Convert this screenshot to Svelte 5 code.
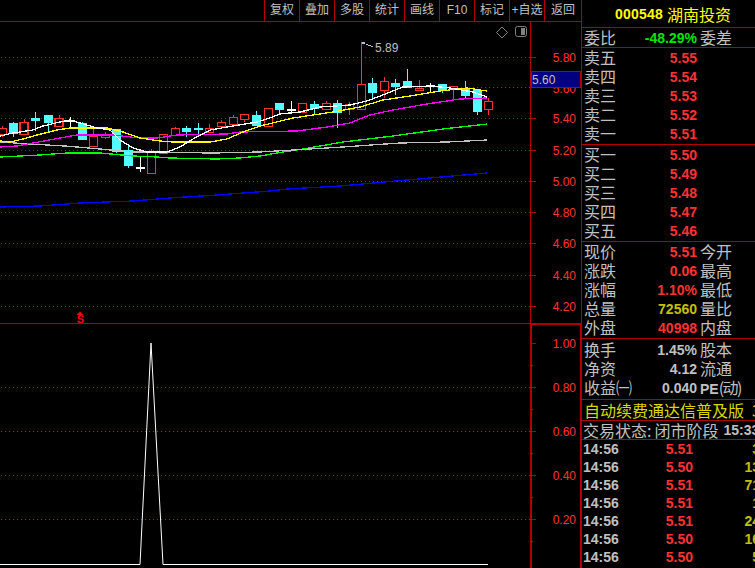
<script>
  const buttons = ['复权', '叠加', '多股', '统计', '画线', 'F10', '标记', '+自选', '返回'];

  // [centre x, high, low, body top, body bottom, half width, kind]
  const candles = [
    [2, 126, 137, 128, 134, 4, 'r'], [12.5, 122, 137, 123, 133, 4, 'c'], [23.5, 119, 134, 122, 134, 4, 'r'],
    [35, 112, 131, 118, 120, 4, 'c'], [47.5, 115, 132, 115, 122, 4, 'c'], [58.5, 115, 126, 118, 126, 4, 'r'],
    [70, 117, 127, 120, 121, 4, 'w'], [82, 122, 140, 123, 139, 4, 'c'], [93, 126, 146, 136, 146, 4, 'r'],
    [105, 132, 139, 134, 137, 4, 'r'], [116, 129, 153, 129, 151, 4, 'c'], [128, 145, 168, 150, 165, 4, 'c'],
    [140, 157, 172, 167, 168, 4, 'w'], [151, 149, 173, 151, 173, 4, 'r'], [163, 134, 153, 134, 153, 4, 'r'],
    [175, 127, 135, 128, 135, 4, 'r'], [186, 126, 137, 128, 131, 4, 'c'], [198, 123, 137, 128, 129, 4, 'c'],
    [209, 124, 132, 128, 132, 4, 'r'], [221, 120, 126, 122, 126, 4, 'r'], [233, 115, 124, 117, 124, 4, 'r'],
    [244, 114, 122, 114, 119, 4, 'r'], [256, 111, 125, 115, 125, 4, 'c'], [268, 108, 126, 108, 126, 4, 'r'],
    [279, 103, 114, 103, 109, 4, 'c'], [291, 101, 114, 109, 110, 4, 'w'], [302, 103, 112, 103, 112, 4, 'r'],
    [314, 101, 114, 104, 108, 4, 'c'], [326, 101, 109, 103, 109, 4, 'r'], [337, 100, 128, 103, 112, 4, 'c'],
    [349, 102, 115, 104, 109, 4, 'r'], [361, 42, 109, 84, 109, 4, 'r'], [372, 78, 99, 83, 92, 4, 'c'],
    [384, 77, 98, 81, 90, 4, 'r'], [395, 79, 95, 83, 86, 4, 'c'], [407, 69, 87, 81, 87, 4, 'c'],
    [419, 80, 90, 88, 90, 4, 'r'], [430, 83, 92, 85, 86, 4, 'w'], [442, 84, 93, 84, 90, 4, 'c'],
    [453, 86, 101, 86, 89, 4, 'r'], [465, 81, 98, 89, 95, 4, 'c'], [477, 90, 115, 90, 111, 4, 'c'],
    [488, 98, 115, 101, 109, 4, 'r']
  ];

  const lines = [
    ['blue', '0,207 40,206 80,203 133,201 170,198 217,195 270,191 287,189 340,186 407,180 487,173'],
    ['green', '0,157 40,155 67,153 100,153 133,156 157,157 170,158 217,159 240,158 260,156 277,153 303,149 343,142 393,136 443,129 487,124'],
    ['gray', '0,142 30,144 65,146 100,149 133,152 213,153 260,152 343,147 357,146 400,143 447,142 487,140'],
    ['magenta', '0,147 17,146 33,143 60,138 77,135 113,135 140,138 157,138 177,135 227,134 240,132 297,131 327,127 350,123 370,115 393,110 427,104 460,99 487,98'],
    ['yellow', '0,141 10,142 23,139 37,135 57,130 70,128 107,128 123,132 140,138 160,141 173,142 210,142 227,139 243,132 260,126 293,118 333,112 360,107 383,100 410,96 440,91 467,88 487,91'],
    ['white', '0,136 13,133 33,130 43,126 60,122 70,120 80,123 97,128 110,130 120,140 133,148 147,152 167,152 180,147 193,139 210,130 233,126 257,122 270,118 280,114 300,112 320,107 350,105 367,101 383,95 403,87 430,86 450,88 473,92 487,97']
  ];

  const grid = [57, 87, 118, 150, 181, 212, 243, 275, 306];
  const upperLabels = [[5.8, 57], [5.6, 88], [5.4, 118], [5.2, 150], [5.0, 181], [4.8, 212], [4.6, 243], [4.4, 275], [4.2, 306]];
  const lowerLabels = [['1.00', 343], ['0.80', 387], ['0.60', 431], ['0.40', 475], ['0.20', 519]];

  const sells = [['卖五', '5.55'], ['卖四', '5.54'], ['卖三', '5.53'], ['卖二', '5.52'], ['卖一', '5.51']];
  const buys = [['买一', '5.50'], ['买二', '5.49'], ['买三', '5.48'], ['买四', '5.47'], ['买五', '5.46']];
  const quote = [
    ['现价', '5.51', '今开', 'red'], ['涨跌', '0.06', '最高', 'red'], ['涨幅', '1.10%', '最低', 'red'],
    ['总量', '72560', '量比', 'vol'], ['外盘', '40998', '内盘', 'red']
  ];
  const stats = [['换手', '1.45%', '股本'], ['净资', '4.12', '流通']];
  const ticks = [
    ['14:56', '5.51', '3'], ['14:56', '5.50', '13'], ['14:56', '5.51', '71'], ['14:56', '5.51', '1'],
    ['14:56', '5.51', '24'], ['14:56', '5.50', '16'], ['14:56', '5.50', '5']
  ];
</script>

<div class="screen">
  <div class="left">
    <div class="toolbar">
      {#each buttons as b}
        <div class="tool">{b}</div>
      {/each}
    </div>
    <svg class="chart" width="581" height="546" viewBox="0 22 581 546">
      {#each grid as y}
        <line class="dots" x1="1" x2="530" y1={y + 0.5} y2={y + 0.5} />
        <line class="axis" x1="530" x2="536" y1={y + 0.5} y2={y + 0.5} />
      {/each}
      {#each lowerLabels.slice(1) as l}
        <line class="dots" x1="1" x2="530" y1={l[1] + 0.5} y2={l[1] + 0.5} />
      {/each}
      {#each lowerLabels as l}
        <line class="axis" x1="531" x2="536" y1={l[1] + 0.5} y2={l[1] + 0.5} />
        <line class="axis" x1="531" x2="533" y1={l[1] + 22.5} y2={l[1] + 22.5} />
      {/each}

      {#each candles as [x, hi, lo, top, bot, w, kind]}
        <g class={kind}>
          {#if kind === 'r'}
            <line x1={x + 0.5} x2={x + 0.5} y1={hi} y2={top} />
            <line x1={x + 0.5} x2={x + 0.5} y1={bot} y2={lo} />
            <rect class="hollow" x={x - w + 0.5} y={top + 0.5} width={w * 2} height={bot - top} />
          {:else}
            <line x1={x + 0.5} x2={x + 0.5} y1={hi} y2={lo} />
            <rect class="solid" x={x - w} y={top} width={w * 2 + 1} height={bot - top + 1} />
          {/if}
        </g>
      {/each}

      {#each lines as [cls, pts]}
        <polyline class="ma {cls}" points={pts} />
      {/each}

      <path class="flag" d="M361.5 42.5h3M362 44l3-1M366 44l7 3" />
      <text class="hl" x="375" y="52">5.89</text>
      <path class="diamond" d="M502 27l5.5 5.5-5.5 5.5-5.5-5.5z" />
      <rect class="winbox" x="515.5" y="26.5" width="11" height="10" rx="2" />
      <rect class="winfill" x="521" y="28" width="4" height="7" />

      <polygon class="mark" points="80,311.5 76.5,315 83.5,315" />
      <text class="mark-s" x="80.5" y="323">S</text>

      <polyline class="pulse" points="0,564.5 140,564.5 151,343 163,564.5 488,564.5" />

      <line class="rule" x1="0" x2="530" y1="323.5" y2="323.5" />
      <rect class="rule-fill" x="530" y="323" width="51" height="2" />
      <line class="rule" x1="530.5" x2="530.5" y1="22" y2="323" />
      <rect class="rule-fill" x="530" y="323" width="2" height="245" />
      <rect class="rule-fill" x="580" y="323" width="1" height="245" />

      {#each upperLabels as [v, y]}
        <text class="axis-label" x="576" y={y + 5}>{v.toFixed(2)}</text>
      {/each}
      {#each lowerLabels as [v, y]}
        <text class="axis-label" x="576" y={y + 5}>{v}</text>
      {/each}

      <rect class="cursor" x="531.5" y="71.5" width="49" height="16" />
      <text class="cursor-text" x="532" y="84">5.60</text>
    </svg>
  </div>

  <aside class="panel">
    <div class="title"><b>000548</b><span>湖南投资</span></div>
    <div class="section ratio">
      <div class="row"><span>委比</span><b class="green">-48.29%</b><span class="second">委差</span></div>
    </div>
    <div class="section five">
      {#each sells as [l, v]}
        <div class="row"><span>{l}</span><b class="red">{v}</b></div>
      {/each}
    </div>
    <div class="section five">
      {#each buys as [l, v]}
        <div class="row"><span>{l}</span><b class="red">{v}</b></div>
      {/each}
    </div>
    <div class="section five">
      {#each quote as [l, v, s, c]}
        <div class="row"><span>{l}</span><b class={c}>{v}</b><span class="second">{s}</span></div>
      {/each}
    </div>
    <div class="section stats">
      {#each stats as [l, v, s]}
        <div class="row"><span>{l}</span><b>{v}</b><span class="second">{s}</span></div>
      {/each}
      <div class="row"><span>收益㈠</span><b>0.040</b><span class="second pe"><b>PE</b><span class="dyn">(动)</span></span></div>
    </div>
    <div class="section notice"><span>自动续费通达信普及版</span><span class="more">3</span></div>
    <div class="section status"><span>交易状态:</span><span class="state">闭市阶段</span><b>15:33</b></div>
    <div class="ticks">
      {#each ticks as [t, p, n]}
        <div class="tick"><b>{t}</b><b class="red">{p}</b><b class="vol">{n}</b></div>
      {/each}
    </div>
  </aside>
</div>

<style>
  :global(body) {
    margin: 0;
    background: #000;
  }
  .screen {
    display: flex;
    width: 755px;
    height: 568px;
    overflow: hidden;
    background: #000;
    color: #c0c0c0;
    font-family: "Noto Sans CJK SC", "Liberation Sans", sans-serif;
  }
  .left {
    display: flex;
    flex-direction: column;
    width: 581px;
    flex: none;
  }
  .toolbar {
    display: flex;
    justify-content: flex-end;
    height: 21px;
    flex: none;
    border-bottom: 1px solid #b00000;
  }
  .tool {
    width: 34px;
    border-left: 1px solid #b00000;
    font-size: 12px;
    line-height: 21px;
    text-align: center;
    font-family: "Liberation Sans", "Noto Sans CJK SC", sans-serif;
  }
  .tool:last-child {
    width: 36px;
  }
  .chart {
    display: block;
    flex: none;
  }
  .dots {
    stroke: #d00000;
    stroke-dasharray: 1 3;
    shape-rendering: crispEdges;
  }
  .axis, .rule {
    stroke: #b00000;
    shape-rendering: crispEdges;
  }
  .rule-fill {
    fill: #b00000;
  }
  .r line { stroke: #ff3232; shape-rendering: crispEdges; }
  .c line { stroke: #54ffff; shape-rendering: crispEdges; }
  .w line { stroke: #fff; shape-rendering: crispEdges; }
  .hollow {
    fill: #000;
    stroke: #ff3232;
    stroke-width: 1.2;
    shape-rendering: crispEdges;
  }
  .c .solid { fill: #54ffff; shape-rendering: crispEdges; }
  .w .solid { fill: #fff; shape-rendering: crispEdges; }
  .ma {
    fill: none;
    stroke-width: 1.3;
    shape-rendering: crispEdges;
  }
  .ma.white { stroke: #fff; }
  .ma.yellow { stroke: #ffff00; }
  .ma.magenta { stroke: #ff00ff; }
  .ma.gray { stroke: #c0c0c0; }
  .ma.green { stroke: #00ff00; }
  .ma.blue { stroke: #0000ff; }
  .flag {
    fill: none;
    stroke: #c0c0c0;
    shape-rendering: crispEdges;
  }
  .hl {
    fill: #c0c0c0;
    font: 12px "Liberation Sans", sans-serif;
  }
  .diamond {
    fill: none;
    stroke: #808080;
  }
  .winbox {
    fill: none;
    stroke: #808080;
  }
  .winfill {
    fill: #808080;
  }
  .mark {
    fill: #ff0000;
  }
  .mark-s {
    fill: #ff0000;
    font: bold 11px "Liberation Sans", sans-serif;
    text-anchor: middle;
  }
  .pulse {
    fill: none;
    stroke: #fff;
    stroke-width: 1;
  }
  .axis-label {
    fill: #ff3232;
    font: 12px "Liberation Sans", sans-serif;
    text-anchor: end;
  }
  .cursor {
    fill: #000080;
    stroke: #b00000;
    shape-rendering: crispEdges;
  }
  .cursor-text {
    fill: #c0c0c0;
    font: 12px "Liberation Sans", sans-serif;
  }

  .panel {
    flex: none;
    width: 174px;
    height: 568px;
    box-sizing: border-box;
    border-left: 1px solid #b00000;
    overflow: hidden;
    font-size: 16px;
  }
  .panel b {
    font: bold 14px "Liberation Sans", sans-serif;
  }
  .title {
    display: flex;
    justify-content: center;
    align-items: center;
    gap: 4px;
    height: 27px;
    border-bottom: 1px solid #b00000;
    color: #ffff00;
    padding-left: 9px;
  }
  .title b {
    letter-spacing: 0.2px;
  }
  .section {
    box-sizing: border-box;
    border-bottom: 1px solid #b00000;
  }
  .ratio {
    height: 20px;
  }
  .five {
    height: 97px;
  }
  .stats {
    height: 61px;
    padding-top: 1px;
  }
  .row {
    display: grid;
    grid-template-columns: 48px 65px auto;
    align-items: center;
    height: 19px;
    line-height: 19px;
    padding-left: 2px;
    white-space: nowrap;
  }
  .row > b {
    text-align: right;
  }
  .second {
    margin-left: 3px;
  }
  .dyn {
    letter-spacing: -1.5px;
  }
  .panel b.red { color: #ff3232; }
  .panel b.green { color: #00e600; }
  .panel b.vol { color: #c0c000; }
  .notice {
    display: flex;
    align-items: center;
    height: 21px;
    padding-left: 2px;
    color: #d8d800;
    white-space: nowrap;
  }
  .more {
    margin-left: 8px;
  }
  .status {
    display: flex;
    align-items: center;
    height: 19px;
    padding-left: 1px;
    white-space: nowrap;
  }
  .state {
    margin-left: 3px;
  }
  .status b {
    margin-left: 5px;
  }
  .tick {
    display: grid;
    grid-template-columns: 36px 74px 67px;
    align-items: center;
    height: 18px;
    padding-left: 1px;
    white-space: nowrap;
  }
  .tick b:not(:first-child) {
    text-align: right;
  }
</style>
